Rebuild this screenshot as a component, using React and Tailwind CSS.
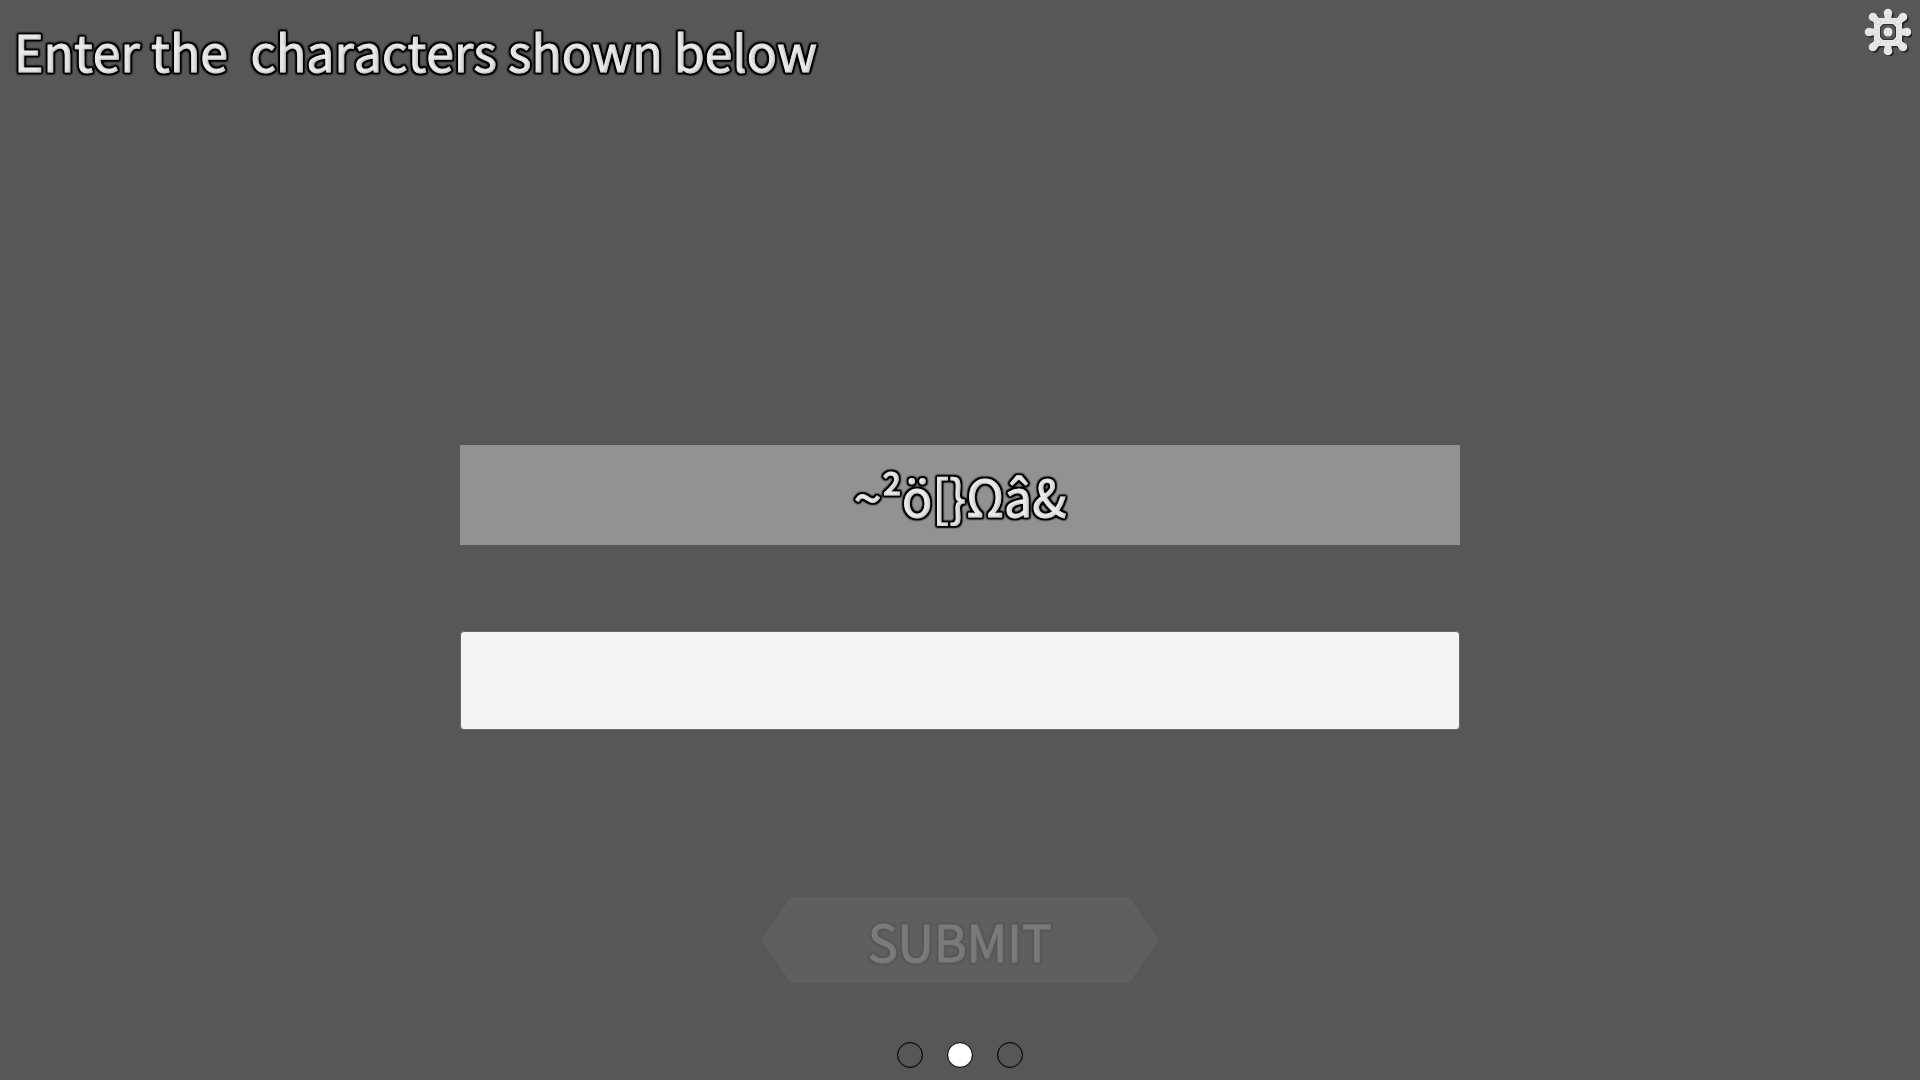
import React, { useState } from "react";

const STEPS = [1, 2, 3];
const CURRENT_STEP = 2;
const CODE = "~²ö[}Ωâ&";

// Raised lettering: light from the top left, dark rim around each glyph
function BevelFilter({ id, rim }) {
  return (
    <svg className="absolute h-0 w-0" aria-hidden="true">
      <filter id={id} x="-5%" y="-20%" width="110%" height="140%" colorInterpolationFilters="sRGB">
        <feMorphology in="SourceAlpha" operator="dilate" radius="1" result="fat" />
        <feGaussianBlur in="fat" stdDeviation="1.3" result="soft" />
        <feComponentTransfer in="soft" result="edge">
          <feFuncA type="linear" slope="2.6" />
        </feComponentTransfer>
        <feComponentTransfer in="edge" result="rim">
          <feFuncA type="linear" slope={rim} />
        </feComponentTransfer>
        <feGaussianBlur in="SourceAlpha" stdDeviation="1" result="inner" />
        <feOffset in="inner" dx="-2" dy="-1" result="moved" />
        <feComposite in="SourceAlpha" in2="moved" operator="out" result="side" />
        <feFlood floodColor="#8c8c8c" floodOpacity="0.35" />
        <feComposite in2="side" operator="in" result="shade" />
        <feMerge>
          <feMergeNode in="rim" />
          <feMergeNode in="SourceGraphic" />
          <feMergeNode in="shade" />
        </feMerge>
      </filter>
    </svg>
  );
}

const KNOBS = [[24, 5], [24, 43], [5, 24], [43, 24], [9, 9], [39, 9], [9, 39], [39, 39]];
const RIVETS = [[24, 12], [24, 36], [12, 24], [36, 24], [14, 14], [34, 14], [14, 34], [34, 34]];

function GearIcon() {
  const shape = (
    <>
      <path d="M13 10H35L38 13V35L35 38H13L10 35V13ZM19 16L16 19V29L19 32H29L32 29V19L29 16Z" fillRule="evenodd" stroke="none" />
      <path d="M24 5V13M24 35V43M5 24H13M35 24H43M9 9L15 15M39 9L33 15M9 39L15 33M39 39L33 33" strokeWidth="7" />
      {KNOBS.map(([x, y]) => (
        <circle key={`${x}-${y}`} cx={x} cy={y} r="4.3" stroke="none" />
      ))}
      <circle cx="24" cy="24" r="4.5" stroke="none" />
    </>
  );
  return (
    <svg viewBox="0 0 48 48" className="h-12 w-12" aria-hidden="true">
      <g fill="#242424" stroke="#242424" transform="translate(1.5 1.5)">{shape}</g>
      <path d="M19 16L16 19V29L19 32H29L32 29V19L29 16Z" fill="#575757" stroke="#333" strokeWidth="2" />
      <g fill="#e6e6e4" stroke="#e6e6e4">{shape}</g>
      {RIVETS.map(([x, y]) => (
        <circle key={`${x}-${y}`} cx={x} cy={y} r="2.5" fill="#ededeb" stroke="#d0d0ce" strokeWidth="0.8" />
      ))}
    </svg>
  );
}

export default function App() {
  const [value, setValue] = useState("");

  return (
    <div className="flex min-h-screen flex-col bg-[#575757] font-['Noto_Sans_CJK_SC',sans-serif] text-[50px] leading-[76px] font-normal text-[#ebebeb] [font-kerning:none]">
      <BevelFilter id="bevel" rim="1" />
      <BevelFilter id="bevel-faint" rim="0.4" />

      {/* Top bar */}
      <header className="flex items-start justify-between pt-2 pr-2 pl-3.5">
        <h1 className="pt-1 whitespace-pre [-webkit-text-stroke:1px_#ebebeb] [filter:url(#bevel)]">
          <label htmlFor="code">{"Enter the  characters shown below"}</label>
        </h1>
        <button type="button" aria-label="Settings">
          <GearIcon />
        </button>
      </header>

      {/* Challenge */}
      <form
        className="flex flex-1 flex-col items-center justify-end"
        onSubmit={e => e.preventDefault()}
      >
        <div className="flex h-[100px] w-full max-w-[1000px] items-center justify-center bg-[#929292]">
          <span className="[-webkit-text-stroke:1px_#ebebeb] [filter:url(#bevel)]">{CODE}</span>
        </div>
        <input
          id="code"
          type="text"
          autoComplete="off"
          value={value}
          onChange={e => setValue(e.target.value)}
          className="mt-[86px] h-[99px] w-full max-w-[1000px] rounded-sm border border-[#6a6a6a] bg-[#f4f4f4] px-4 text-center text-[#323232] outline-none"
        />
        <button
          type="submit"
          disabled={value !== CODE}
          className="group mt-[167px] flex h-[86px] w-[398px] items-center justify-center bg-[#929292] [clip-path:polygon(30px_0,calc(100%-30px)_0,100%_50%,calc(100%-30px)_100%,30px_100%,0_50%)] disabled:bg-[#5f5f5f]"
        >
          <span className="[-webkit-text-stroke:1px_#ebebeb] [filter:url(#bevel)] group-disabled:opacity-20 group-disabled:[filter:url(#bevel-faint)]">
            SUBMIT
          </span>
        </button>
      </form>

      {/* Step dots */}
      <footer className="flex justify-center gap-6 pt-[59px] pb-3">
        {STEPS.map(step => (
          <span
            key={step}
            className={`size-[26px] rounded-full border border-black shadow-[inset_0_0_1px_#000] ${step === CURRENT_STEP ? "bg-white" : ""}`}
          />
        ))}
      </footer>
    </div>
  );
}
